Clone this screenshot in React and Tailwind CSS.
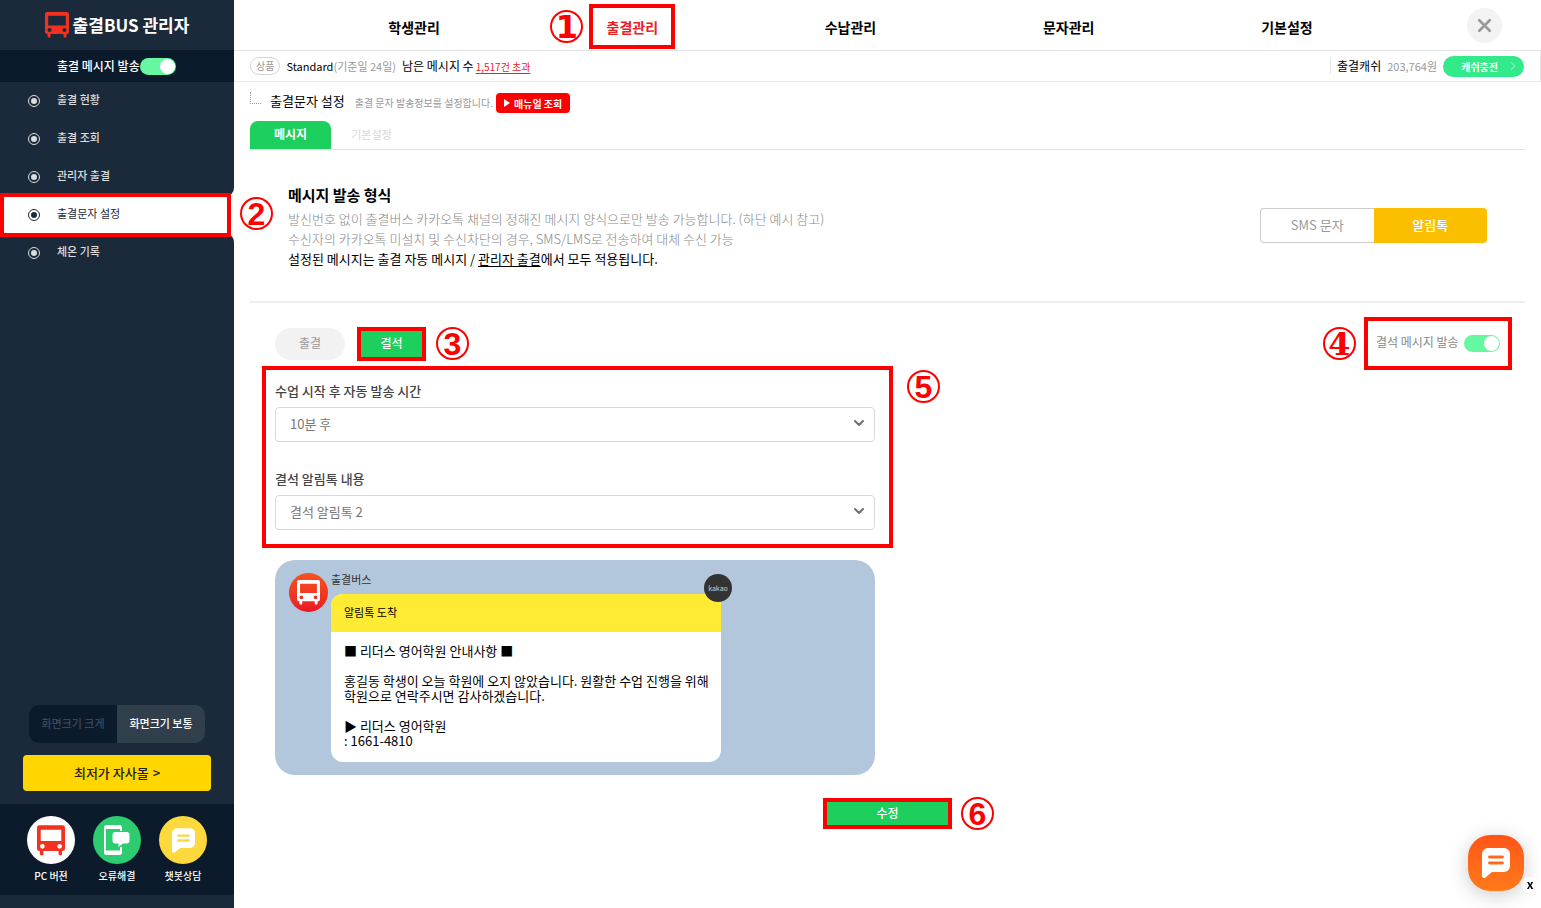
import { useState } from 'react';
import { ChevronDown, ChevronRight, X } from 'lucide-react';

const MENU = ['출결 현황', '출결 조회', '관리자 출결', '출결문자 설정', '체온 기록'];
const NAV = ['학생관리', '출결관리', '수납관리', '문자관리', '기본설정'];

function BusIcon({ className }) {
  return (
    <svg viewBox="0 0 24 26" className={className} fill="currentColor" aria-hidden="true">
      <path
        fillRule="evenodd"
        d="M2 0h20a2 2 0 0 1 2 2v18a2 2 0 0 1-2 2h-.5v2.600a1 1 0 0 1-1 1h-1a1 1 0 0 1-1-1V22h-13v2.600a1 1 0 0 1-1 1h-1a1 1 0 0 1-1-1V22H2a2 2 0 0 1-2-2V2a2 2 0 0 1 2-2Zm1.200 3.800v9.700h17.600V3.800H3.200ZM4.600 16a2 2 0 1 0 0 4 2 2 0 0 0 0-4Zm14.800 0a2 2 0 1 0 0 4 2 2 0 0 0 0-4Z"
      />
    </svg>
  );
}

function ChatIcon({ className, line }) {
  return (
    <svg viewBox="0 0 28 30" className={className} aria-hidden="true">
      <path
        fill="#fff"
        d="M6 0h16a6 6 0 0 1 6 6v12a6 6 0 0 1-6 6H10l-6.500 5.400C2 30.500 0 29.800 0 28V6a6 6 0 0 1 6-6Z"
      />
      <path d="M7.500 9h13M7.500 15h13" stroke={line} strokeWidth="2.800" strokeLinecap="round" />
    </svg>
  );
}

function PhoneIcon() {
  return (
    <svg viewBox="0 0 26 30" className="h-[30px] w-[26px]" aria-hidden="true">
      <path
        fill="#fff"
        fillRule="evenodd"
        d="M2.500 0h13A2.500 2.500 0 0 1 18 2.500v25a2.500 2.500 0 0 1-2.500 2.500h-13A2.500 2.500 0 0 1 0 27.500v-25A2.500 2.500 0 0 1 2.500 0ZM1.800 4v21.500h14.400V4H1.800Z"
      />
      <path fill="#2ecc71" d="M8 6h12v17H8z" />
      <path
        fill="#fff"
        d="M11.500 7h11A3 3 0 0 1 25.500 10v5.500a3 3 0 0 1-3 3H19L14.500 22v-3.500h-3a3 3 0 0 1-3-3V10a3 3 0 0 1 3-3Z"
      />
      <path fill="#fff" d="M16.200 22H18v5h-1.800z" />
    </svg>
  );
}

function RadioDot() {
  return (
    <span className="flex size-3 items-center justify-center rounded-full border border-current">
      <span className="size-[6px] rounded-full bg-current" />
    </span>
  );
}

// Numbered guide marker
function Mark({ n, className = '', font = 'font-["Liberation_Sans"]' }) {
  return (
    <span
      className={`flex size-[33px] shrink-0 items-center justify-center rounded-full border-2 border-[#f00] text-[32px] leading-none font-bold text-[#f00] ${font} ${className}`}
    >
      {n}
    </span>
  );
}

function Toggle({ id, label }) {
  const [on, setOn] = useState(true);
  return (
    <input
      id={id}
      type="checkbox"
      aria-label={label}
      checked={on}
      onChange={() => setOn(!on)}
      className="h-[17px] w-9 shrink-0 appearance-none rounded-full bg-gray-300 p-px before:block before:size-[15px] before:rounded-full before:bg-white checked:bg-[#66f7a1] checked:before:ml-[19px]"
    />
  );
}

function SelectField({ id, label, options }) {
  return (
    <div>
      <label htmlFor={id} className="mb-[6px] block text-[13px] leading-5 font-medium text-[#444]">
        {label}
      </label>
      <div className="relative">
        <select
          id={id}
          className="h-[35px] w-full appearance-none rounded border border-[#d9d9d9] bg-white px-[14px] pb-[2px] text-[13px] text-[#777]"
        >
          {options.map((o) => (
            <option key={o}>{o}</option>
          ))}
        </select>
        <ChevronDown
          className="pointer-events-none absolute top-2 right-2 size-4 text-[#707070]"
          strokeWidth={3}
        />
      </div>
    </div>
  );
}

function Shortcut({ label, color, children }) {
  return (
    <a href="#" className="flex w-[66px] flex-col items-center">
      <span className={`flex size-12 items-center justify-center rounded-full ${color}`}>{children}</span>
      <span className="mt-1 text-[10px] leading-4 font-medium whitespace-nowrap text-white">{label}</span>
    </a>
  );
}

function Sidebar() {
  return (
    <aside className="flex w-[234px] shrink-0 flex-col bg-[#1b2a3b]">
      <a href="#" className="flex h-[50px] items-center justify-center gap-1 text-white">
        <BusIcon className="h-[26px] w-6 text-[#f4301f]" />
        <span className="text-[17px] font-bold">출결BUS 관리자</span>
      </a>
      <div className="flex h-8 items-center bg-[#0b1b2b] pl-[57px]">
        <label htmlFor="send-all" className="text-[12px] font-medium text-white">
          출결 메시지 발송
        </label>
        <Toggle id="send-all" />
      </div>

      <nav className="bg-white">
        {MENU.map((item, i) => {
          const active = i === 3;
          return (
            <a
              key={item}
              href="#"
              className={`relative flex h-[38px] items-center gap-[17px] pl-7 text-[11px] ${
                active ? 'z-10 bg-white text-[#1b2a3b]' : 'bg-[#1b2a3b] font-medium text-[#dddddd]'
              } ${i === 2 ? 'rounded-br-lg' : ''} ${i === 4 ? 'rounded-tr-lg' : ''}`}
            >
              <RadioDot />
              <span className="pb-1">{item}</span>
              {active && (
                <>
                  <span className="absolute -inset-y-[3px] right-[3px] left-0 border-4 border-[#f00]" />
                  <Mark n={2} className="absolute top-px left-[240px]" />
                </>
              )}
            </a>
          );
        })}
      </nav>

      <div className="mt-auto">
        <div className="mx-[29px] grid h-[38px] grid-cols-2 overflow-hidden rounded-[10px] text-[11px]">
          <button className="bg-[#0b1b2b] pb-[2px] text-[#465364]">화면크기 크게</button>
          <button className="bg-[#313f4d] pb-[2px] font-medium text-white">화면크기 보통</button>
        </div>
        <a
          href="#"
          className="mx-[23px] mt-3 flex h-9 items-center justify-center gap-1 rounded bg-[#ffd600] text-[13px] font-medium text-[#222]"
        >
          최저가 자사몰 <span>&gt;</span>
        </a>
      </div>
      <div className="mt-[13px] mb-[13px] flex h-[91px] justify-center bg-[#0b1b2b] pt-3">
        <Shortcut label="PC 버젼" color="bg-white">
          <BusIcon className="h-[31px] w-7 text-[#f4301f]" />
        </Shortcut>
        <Shortcut label="오류해결" color="bg-[#2ecc71]">
          <PhoneIcon />
        </Shortcut>
        <Shortcut label="챗봇상담" color="bg-[#fdd93d]">
          <ChatIcon className="h-[25px] w-[23px]" line="#fdd93d" />
        </Shortcut>
      </div>
    </aside>
  );
}

function TopBar() {
  return (
    <header>
      <div className="flex h-[51px] items-center border-b border-[#e3e3e3]">
        <nav className="grid h-full flex-1 grid-cols-5 pl-[71px]">
          {NAV.map((item, i) => (
            <a
              key={item}
              href="#"
              className={`relative flex items-center justify-center pt-1 text-[14px] font-bold ${
                i === 1 ? 'text-[#e8212b]' : 'text-black'
              }`}
            >
              {item}
              {i === 1 && (
                <span className="absolute inset-x-0 top-1 mx-auto h-[45px] w-[86px] border-4 border-[#f00]">
                  <Mark
                    n={1}
                    font='font-["DejaVu_Sans"]'
                    className="absolute top-[2px] right-[88px]"
                  />
                </span>
              )}
            </a>
          ))}
        </nav>
        <div className="w-[145px] pl-[71px]">
          <button
            aria-label="닫기"
            className="flex size-[35px] items-center justify-center rounded-full bg-[#f3f3f3] text-[#999]"
          >
            <X className="size-[21px]" strokeWidth={3} />
          </button>
        </div>
      </div>

      <div className="flex h-[31px] items-center justify-between border-r border-b border-[#e8e8e8] pr-4 pl-4 text-[12px]">
        <div className="flex items-center">
          <span className="mr-[6px] rounded-[9px] border border-[#d5d5d5] px-[5px] text-[10px] leading-4 text-[#999]">
            상품
          </span>
          <span className="text-[11px]">Standard</span>
          <span className="mr-[6px] text-[11px] text-[#999]">(기준일 24일)</span>
          <span className="mr-[2px]">남은 메시지 수</span>
          <a href="#" className="text-[10px] text-[#e8212b] underline underline-offset-2">
            1,517건 초과
          </a>
        </div>
        <div className="flex items-center">
          <span className="mr-[6px] h-4 w-px bg-[#e5e5e5]" />
          <span className="mr-[6px] text-[12px]">출결캐쉬</span>
          <span className="mr-[6px] text-[11px] text-[#999]">203,764원</span>
          <button className="flex h-[21px] w-[81px] items-center justify-end gap-2 rounded-full bg-[#33ea8a] pr-1 text-[10px] font-bold text-white">
            캐쉬충전
            <ChevronRight className="size-[14px]" strokeWidth={1} />
          </button>
        </div>
      </div>
    </header>
  );
}

function Preview() {
  return (
    <div className="mt-3 ml-[25px] flex h-[215px] w-[600px] rounded-[20px] bg-[#b2c7db] pt-[13px] pl-[14px]">
      <span className="flex size-[39px] shrink-0 items-center justify-center rounded-full bg-linear-to-b from-[#f7521c] to-[#e91426] text-white">
        <BusIcon className="h-[25px] w-[23px]" />
      </span>
      <div className="relative ml-[3px] w-[390px]">
        <p className="h-[21px] text-[11px] leading-3 text-[#333]">출결버스</p>
        <div className="overflow-hidden rounded-xl bg-white text-black">
          <p className="h-[38px] bg-[#ffeb33] px-[13px] text-[11px] leading-9">알림톡 도착</p>
          <p className="h-[130px] px-[13px] pt-[11px] text-[13px] leading-[15px] whitespace-pre">
            ■ 리더스 영어학원 안내사항 ■
            <br />
            <br />
            홍길동 학생이 오늘 학원에 오지 않았습니다. 원활한 수업 진행을 위해
            <br />
            학원으로 연락주시면 감사하겠습니다.
            <br />
            <br />
            ▶ 리더스 영어학원
            <br />: 1661-4810
          </p>
        </div>
        <span className="absolute top-px -right-[11px] flex size-7 items-center justify-center rounded-full bg-[#333] text-[7px] text-[#ccc]">
          kakao
        </span>
      </div>
    </div>
  );
}

export default function App() {
  return (
    <div className='flex min-h-screen bg-white font-["Noto_Sans_CJK_KR",sans-serif] text-black'>
      <Sidebar />
      <div className="min-w-0 flex-1">
        <TopBar />
        <main className="px-4">
          <div className="flex h-[39px] items-center">
            <span className="mr-[9px] mb-2 h-3 w-[11px] border-b border-l border-dotted border-[#999]" />
            <h1 className="mr-[10px] pb-[2px] text-[13px]">출결문자 설정</h1>
            <p className="mr-[3px] pt-[2px] text-[10px] text-[#999]">출결 문자 발송정보를 설정합니다.</p>
            <a
              href="#"
              className="mt-[3px] flex h-5 items-center gap-1 rounded bg-[#f00] px-[8px] text-[10px] font-bold text-white"
            >
              <svg viewBox="0 0 6 8" className="h-2 w-[6px]" fill="currentColor" aria-hidden="true">
                <path d="M0 0l6 4-6 4z" />
              </svg>
              매뉴얼 조회
            </a>
          </div>

          <div className="flex border-b border-[#e3e3e3]">
            <button className="h-7 w-[81px] rounded-t-lg bg-[#1dd05d] pb-[2px] text-[12px] font-bold text-white">
              메시지
            </button>
            <button className="h-7 w-[81px] pb-[2px] text-[11px] font-medium text-[#ddd]">기본설정</button>
          </div>

          <section className="flex items-start justify-between border-b-2 border-[#eee] px-[38px] pt-[35px] pb-8">
            <div className="text-[13px] leading-5">
              <h2 className="mb-1 text-[15px] leading-5 font-bold text-black">메시지 발송 형식</h2>
              <p className="font-light text-[#888]">
                발신번호 없이 출결버스 카카오톡 채널의 정해진 메시지 양식으로만 발송 가능합니다. (하단 예시 참고)
              </p>
              <p className="font-light text-[#888]">
                수신자의 카카오톡 미설치 및 수신차단의 경우, SMS/LMS로 전송하여 대체 수신 가능
              </p>
              <p>
                설정된 메시지는 출결 자동 메시지 /{' '}
                <a href="#" className="underline underline-offset-2">
                  관리자 출결
                </a>
                에서 모두 적용됩니다.
              </p>
            </div>
            <div className="mt-[23px] grid h-[35px] w-[227px] shrink-0 grid-cols-2 text-[13px]">
              <button className="rounded-l border border-r-0 border-[#ccc] pb-[2px] text-[#999]">
                SMS 문자
              </button>
              <button className="rounded-r bg-[#fbbf00] pb-[2px] font-medium text-white">알림톡</button>
            </div>
          </section>

          <section className="pt-[14px]">
            <div className="flex items-center pr-[13px] pl-[25px]">
              <button className="mr-3 h-8 w-[70px] rounded-full bg-[#f2f2f2] pb-[2px] text-[12px] text-[#999]">
                출결
              </button>
              <button className="mr-[10px] h-[34px] w-[69px] border-4 border-[#f00] bg-[#1dd05d] pb-[2px] text-[12px] font-medium text-white">
                결석
              </button>
              <Mark n={3} />
              <Mark n={4} font='font-["DejaVu_Serif"]' className="mr-2 ml-auto" />
              <div className="flex h-[53px] w-[148px] items-center justify-between border-4 border-[#f00] px-2">
                <label htmlFor="send-absent" className="pb-1 text-[12px] text-[#888]">
                  결석 메시지 발송
                </label>
                <Toggle id="send-absent" />
              </div>
            </div>

            <div className="-mt-1 ml-3 flex gap-[14px]">
              <div className="flex w-[631px] flex-col gap-[27px] border-4 border-[#f00] pt-[11px] pr-[14px] pb-[14px] pl-[9px]">
                <SelectField
                  id="delay"
                  label="수업 시작 후 자동 발송 시간"
                  options={['10분 후', '20분 후', '30분 후']}
                />
                <SelectField
                  id="template"
                  label="결석 알림톡 내용"
                  options={['결석 알림톡 2', '결석 알림톡 1']}
                />
              </div>
              <Mark n={5} className="mt-1" />
            </div>

            <Preview />

            <div className="mt-[23px] flex justify-center">
              <div className="relative">
                <button className="block h-[31px] w-[129px] border-4 border-[#f00] bg-[#1dd05d] pb-[2px] text-[12px] leading-5 font-medium text-white">
                  수정
                </button>
                <Mark n={6} className="absolute -top-px left-[138px]" />
              </div>
            </div>
          </section>
        </main>
      </div>

      {/* Chat launcher */}
      <div className="fixed right-[17px] bottom-[17px]">
        <button
          aria-label="채팅 상담"
          className="flex size-14 items-center justify-center rounded-[22px] bg-linear-to-b from-[#ff5418] to-[#ff7a1a] shadow-[0_4px_20px_rgba(0,0,0,0.2)]"
        >
          <ChatIcon className="h-[30px] w-7" line="#ff6a1a" />
        </button>
        <button className="absolute -right-[14px] -bottom-[2px] flex size-4 items-center justify-center rounded-full bg-white pb-[2px] text-[12px] leading-none font-bold">
          x
        </button>
      </div>
    </div>
  );
}
